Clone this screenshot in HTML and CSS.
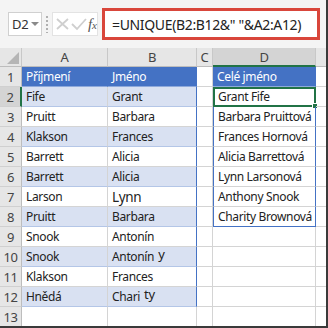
FILE: index.html
```html
<!DOCTYPE html>
<html>
<head>
<meta charset="utf-8">
<link rel="stylesheet" href="styles.css">
</head>
<body>
<div class="frame">
  <div class="fbar">
    <div class="namebox"><span>D2</span><span class="caret"></span></div>
    <div class="dots"></div>
    <div class="icons">
      <svg width="16" height="14" viewBox="0 0 16 14"><path d="M2 2 L13 12 M13 2 L2 12" stroke="#cfcfcf" stroke-width="1.8" fill="none"/></svg>
      <svg width="16" height="14" viewBox="0 0 16 14"><path d="M1 7 L6 12 L15 2" stroke="#cfcfcf" stroke-width="1.8" fill="none"/></svg>
      <span class="fx"><i>f</i><span class="x">x</span></span>
    </div>
    <div class="formula">=UNIQUE(B2:B12&amp;" "&amp;A2:A12)</div>
  </div>
  <div class="sheet">
    <div class="hdr corner"><span class="tri"></span></div>
    <div class="hdr col">A</div>
    <div class="hdr col">B</div>
    <div class="hdr col">C</div>
    <div class="hdr col active">D</div>
    <div class="hdr col e"></div>

    <div class="rn">1</div>
    <div class="c th">Příjmení</div>
    <div class="c th tr">Jméno</div>
    <div class="c"></div>
    <div class="c th">Celé jméno</div>
    <div class="c e"></div>

    <div class="rn active">2</div>
    <div class="c band">Fife</div>
    <div class="c band tr">Grant</div>
    <div class="c"></div>
    <div class="c sp sel">Grant Fife<span class="handle"></span></div>
    <div class="c e"></div>

    <div class="rn">3</div>
    <div class="c">Pruitt</div>
    <div class="c tr">Barbara</div>
    <div class="c"></div>
    <div class="c sp">Barbara Pruittová</div>
    <div class="c e"></div>

    <div class="rn">4</div>
    <div class="c band">Klakson</div>
    <div class="c band tr">Frances</div>
    <div class="c"></div>
    <div class="c sp">Frances Hornová</div>
    <div class="c e"></div>

    <div class="rn">5</div>
    <div class="c">Barrett</div>
    <div class="c tr">Alicia</div>
    <div class="c"></div>
    <div class="c sp">Alicia Barrettová</div>
    <div class="c e"></div>

    <div class="rn">6</div>
    <div class="c band">Barrett</div>
    <div class="c band tr">Alicia</div>
    <div class="c"></div>
    <div class="c sp">Lynn Larsonová</div>
    <div class="c e"></div>

    <div class="rn">7</div>
    <div class="c">Larson</div>
    <div class="c tr big">Lynn</div>
    <div class="c"></div>
    <div class="c sp">Anthony Snook</div>
    <div class="c e"></div>

    <div class="rn">8</div>
    <div class="c band">Pruitt</div>
    <div class="c band tr">Barbara</div>
    <div class="c"></div>
    <div class="c sp last">Charity Brownová</div>
    <div class="c e"></div>

    <div class="rn">9</div>
    <div class="c">Snook</div>
    <div class="c tr">Antonín</div>
    <div class="c"></div>
    <div class="c"></div>
    <div class="c e"></div>

    <div class="rn">10</div>
    <div class="c band">Snook</div>
    <div class="c band tr">Antonín <span class="up">y</span></div>
    <div class="c"></div>
    <div class="c"></div>
    <div class="c e"></div>

    <div class="rn">11</div>
    <div class="c">Klakson</div>
    <div class="c tr">Frances</div>
    <div class="c"></div>
    <div class="c"></div>
    <div class="c e"></div>

    <div class="rn">12</div>
    <div class="c band">Hnědá</div>
    <div class="c band tr">Chari <span class="up">ty</span></div>
    <div class="c"></div>
    <div class="c"></div>
    <div class="c e"></div>

    <div class="rn">13</div>
    <div class="c"></div>
    <div class="c"></div>
    <div class="c"></div>
    <div class="c"></div>
    <div class="c e"></div>
  </div>
</div>
</body>
</html>
```

FILE: styles.css
```css
* { box-sizing: border-box; }
html, body { margin: 0; padding: 0; }
body {
  width: 328px;
  height: 328px;
  overflow: hidden;
  background: #ffffff;
  font-family: "Noto Sans", "Open Sans", sans-serif;
}
.frame {
  width: 328px;
  height: 328px;
  border-right: 2px solid #3a3a3a;
  border-bottom: 2px solid #3a3a3a;
  background: #f4f4f4;
  overflow: hidden;
}
.fbar {
  height: 48px;
  display: flex;
  align-items: center;
  padding: 0 6px 0 8px;
  background: #f4f4f4;
}
.namebox {
  width: 34px;
  height: 24px;
  background: #fff;
  border: 1px solid #d0d0d0;
  display: flex;
  align-items: center;
  padding-left: 3px;
  font-size: 13px;
  letter-spacing: -0.3px;
  color: #333;
}
.caret {
  width: 0; height: 0;
  margin-left: 3px;
  border-left: 4px solid transparent;
  border-right: 4px solid transparent;
  border-top: 4px solid #8a8a8a;
}
.dots {
  width: 2px;
  height: 18px;
  margin: 0 4px 0 4px;
  background-image: radial-gradient(circle, #b0b0b0 0.8px, transparent 1px);
  background-size: 2px 4px;
}
.icons {
  height: 24px;
  width: 46px;
  background: #fff;
  border: 1px solid #e3e3e3;
  display: flex;
  align-items: center;
  padding-left: 2px;
}
.fx {
  font-family: "Liberation Serif", serif;
  font-size: 15px;
  color: #555;
  margin-left: 1px;
}
.fx .x { font-size: 11px; font-style: italic; }
.formula {
  flex: 1;
  margin-left: 4px;
  height: 32px;
  border: 3px solid #d9463b;
  background: #fff;
  display: flex;
  align-items: center;
  padding-left: 7px;
  font-size: 14px;
  letter-spacing: -0.35px;
  color: #222;
  white-space: nowrap;
}
.sheet {
  display: grid;
  grid-template-columns: 22px 86px 89px 16px 103px 12px;
  grid-template-rows: 19px repeat(13, 20px);
  background: #fff;
  font-size: 12px;
  letter-spacing: -0.35px;
  color: #222;
}
.hdr {
  background: #e6e6e6;
  border-right: 1px solid #c8c8c8;
  border-bottom: 1px solid #bdbdbd;
  font-size: 13px;
  color: #444;
  display: flex;
  align-items: center;
  justify-content: center;
}
.hdr.active {
  background: #d4d4d4;
  border-bottom: 2px solid #217346;
}
.corner { position: relative; }
.tri {
  position: absolute;
  right: 2px;
  bottom: 2px;
  width: 0; height: 0;
  border-left: 12px solid transparent;
  border-bottom: 12px solid #b5b5b5;
}
.rn {
  background: #e6e6e6;
  border-right: 1px solid #bdbdbd;
  border-bottom: 1px solid #d0d0d0;
  font-size: 13px;
  color: #444;
  display: flex;
  align-items: center;
  justify-content: center;
}
.rn.active {
  background: #d4d4d4;
  border-right: 2px solid #217346;
}
.c {
  border-right: 1px solid #d4d4d4;
  border-bottom: 1px solid #d4d4d4;
  display: flex;
  align-items: center;
  padding-left: 4px;
  white-space: nowrap;
  overflow: visible;
  position: relative;
}
.c.e { border-right: none; }
.th {
  background: #4472c4;
  color: #fff;
  border-right-color: #4472c4;
  border-bottom-color: #8ea9db;
}
.band { background: #d9e1f2; border-bottom-color: #b4c6e7; }
.tr { border-right: 1px solid #4472c4; }
.big { font-size: 13.5px; }
.sp {
  border-left: 1px solid #4472c4;
  border-right: 1px solid #4472c4;
}
.sp.last { border-bottom: 1px solid #4472c4; }
.sel {
  outline: 2px solid #217346;
  outline-offset: -2px;
}
.handle {
  position: absolute;
  right: -3px;
  bottom: -3px;
  width: 6px;
  height: 6px;
  background: #217346;
  border: 1px solid #fff;
}
.up { position: relative; top: -3px; margin-left: 4px; font-size: 13px; }
```
